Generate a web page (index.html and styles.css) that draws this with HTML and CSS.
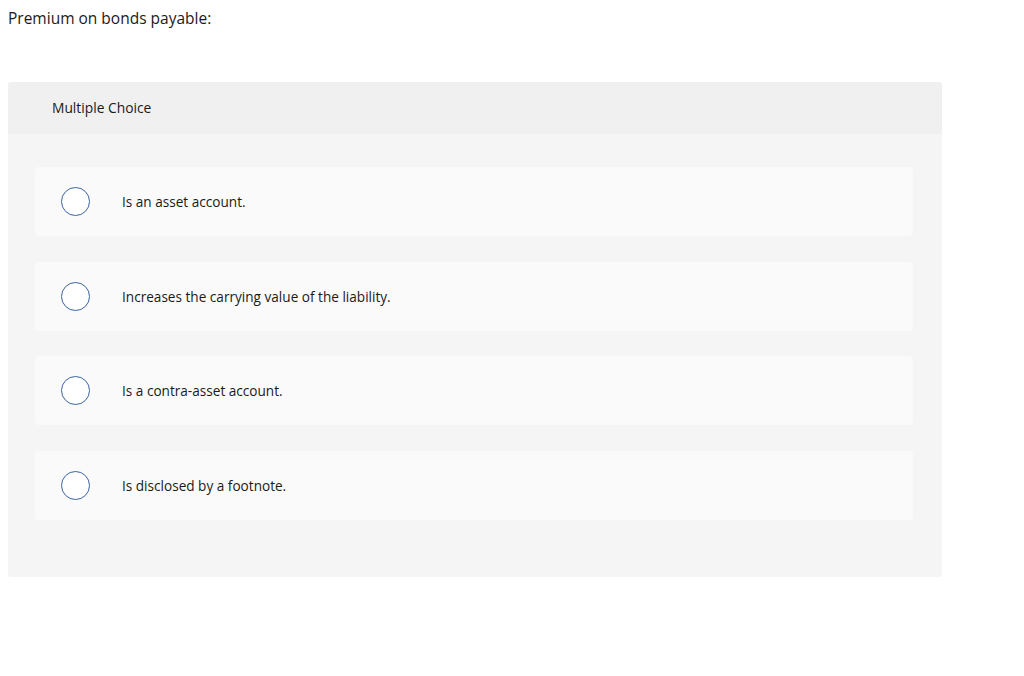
FILE: index.html
```html
<!DOCTYPE html>
<html lang="en">
  <head>
    <meta charset="UTF-8" />
    <title>Premium on bonds payable</title>
    <link rel="stylesheet" href="styles.css">
  </head>
  <body>
    <p class="question">Premium on bonds payable:</p>
    <div class="panel">
      <div class="panel-header">Multiple Choice</div>
      <div class="choices">
        <label class="choice">
          <span class="radio"></span>
          <span class="choice-text">Is an asset account.</span>
        </label>
        <label class="choice">
          <span class="radio"></span>
          <span class="choice-text">Increases the carrying value of the liability.</span>
        </label>
        <label class="choice">
          <span class="radio"></span>
          <span class="choice-text">Is a contra-asset account.</span>
        </label>
        <label class="choice">
          <span class="radio"></span>
          <span class="choice-text">Is disclosed by a footnote.</span>
        </label>
      </div>
    </div>
  </body>
</html>
```

FILE: styles.css
```css
body {
  margin: 8px;
  font-family: "Open Sans", "Liberation Sans", sans-serif;
  color: #1a1a1a;
  background: #fff;
}
.question {
  margin: 0;
  font-size: 15.5px;
  line-height: 20px;
}
.panel {
  margin-top: 54px;
  width: 934px;
  background-color: #f5f5f5;
  border-radius: 3px;
  overflow: hidden;
}
.panel-header {
  height: 52px;
  line-height: 52px;
  padding-left: 44px;
  background-color: #f0f0f0;
  font-size: 13.8px;
}
.choices {
  display: flex;
  flex-direction: column;
  gap: 25.7px;
  padding: 33px 29px 57px 27px;
}
.choice {
  display: flex;
  align-items: center;
  height: 69px;
  padding-left: 26px;
  background-color: #fafafa;
  border-radius: 4px;
  cursor: pointer;
}
.radio {
  width: 27px;
  height: 27px;
  border: 1.5px solid #3a63a0;
  border-radius: 50%;
  background: #fff;
  flex-shrink: 0;
}
.choice-text {
  margin-left: 32px;
  font-size: 13.6px;
}
```
